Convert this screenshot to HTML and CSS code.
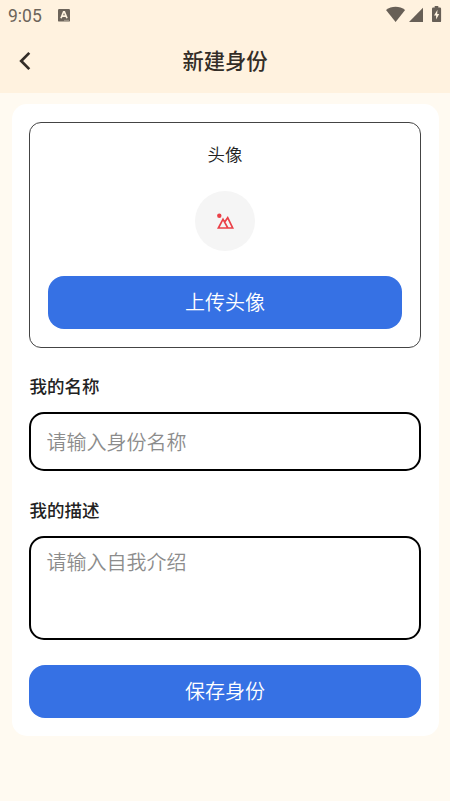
FILE: index.html
```html
<!DOCTYPE html>
<html lang="zh-CN">
<head>
<meta charset="utf-8">
<meta name="viewport" content="width=device-width, initial-scale=1">
<title>新建身份</title>
<link rel="stylesheet" href="styles.css">
</head>
<body>
<header class="top">
  <div class="status">
    <span class="clock">9:05</span>
    <svg class="notice" width="12" height="13" viewBox="0 0 12 13"><rect width="12" height="12.6" rx="1.2" fill="#6c645a"/><path d="M3 9.3 5.6 2.8h.8L9 9.3M4.1 7.2h3.8" fill="none" stroke="#fff3df" stroke-width="1.7"/><path d="M6 11.3h5" stroke="#b6ada0" stroke-width=".8"/></svg>
    <svg class="signals" width="56" height="18" viewBox="0 0 56 18" fill="#675f56">
      <path d="M0 4.1C5.5-.3 13.6-.3 19.1 4.1L9.6 16.1Z"/>
      <path d="M37 1.8V16H23Z"/>
      <path d="M48.7 0h3.6v1.5h1.6q1.2 0 1.2 1.2v12.2q0 1.2-1.2 1.2h-6.7q-1.2 0-1.2-1.2V2.7q0-1.2 1.2-1.2h1.5Z"/>
      <path d="M51.5 3.8 48 9.4h2.1v4.2L53.2 8h-2Z" fill="#fff3df"/>
    </svg>
  </div>
  <div class="bar">
    <svg class="back" width="14" height="20" viewBox="0 0 14 20"><path d="M11.3 1.9 3.2 10l8.1 8.1" fill="none" stroke="#332d27" stroke-width="2.7"/></svg>
    <h1 class="title">新建身份</h1>
  </div>
</header>
<main class="card">
  <section class="avatar-box">
    <div class="avatar-label">头像</div>
    <div class="avatar">
      <svg width="18" height="17" viewBox="0 0 18 17"><circle cx="3.3" cy="2.8" r="2.2" fill="#ea4048"/><path d="M2.4 15 7 6.2l4.8 8.8ZM8.7 8.9l3-4.2L16.7 15h-5" fill="none" stroke="#ea4048" stroke-width="1.7"/></svg>
    </div>
    <button class="btn" type="button">上传头像</button>
  </section>
  <label class="label" for="name">我的名称</label>
  <input class="field" id="name" placeholder="请输入身份名称">
  <label class="label label-bio" for="bio">我的描述</label>
  <textarea class="field field-area" id="bio" placeholder="请输入自我介绍"></textarea>
  <button class="btn save" type="button">保存身份</button>
</main>
</body>
</html>
```
FILE: styles.css
```css
* { box-sizing: border-box; }
body {
  margin: 0;
  min-height: 801px;
  background: #fffaf1;
  color: #222;
  font-family: "Noto Sans CJK SC", sans-serif;
}
.top {
  height: 92.5px;
  background: #fff2df;
}
.status {
  height: 30px;
  display: flex;
  align-items: center;
  padding: 0 8px;
}
.clock {
  width: 50px;
  font: 400 17.5px/30px Roboto, sans-serif;
  color: #6c645a;
  padding-top: 2px;
}
.signals { margin: 0 0 0 auto; }
.bar {
  height: 62px;
  display: grid;
  grid-template-columns: 36px 1fr 36px;
  align-items: center;
}
.back { margin-left: 18px; }
.title {
  margin: -2px 0 0;
  text-align: center;
  font-size: 21.3px;
  font-weight: 500;
  line-height: 32px;
  color: #332d27;
}
.card {
  margin: 11.5px 11.5px 0;
  height: 632px;
  padding: 18px 17.5px;
  border-radius: 15px;
  background: #fff;
  display: flex;
  flex-direction: column;
}
.avatar-box {
  height: 226px;
  border: 1px solid #444;
  border-radius: 12px;
  padding: 16px 18px 0;
  display: flex;
  flex-direction: column;
  align-items: center;
}
.avatar-label {
  font-size: 17.4px;
  font-weight: 350;
  line-height: 30px;
}
.avatar {
  width: 60px;
  height: 60px;
  margin: 22px 0 25px;
  border-radius: 50%;
  background: #f5f5f5;
  display: flex;
  align-items: center;
  justify-content: center;
}
.btn {
  flex: none;
  width: 100%;
  height: 53px;
  padding: 0 0 2px;
  border: 0;
  border-radius: 16px;
  background: #3671e4;
  color: #fff;
  font: 350 20px/30px "Noto Sans CJK SC", sans-serif;
}
.label {
  height: 26px;
  margin: 25px 0 13px .5px;
  font-size: 17.5px;
  font-weight: 500;
  line-height: 26px;
}
.label-bio { margin-top: 26px; }
.field {
  flex: none;
  width: 100%;
  height: 59px;
  padding: 0 15.5px;
  border: 2px solid #000;
  border-radius: 15px;
  background: #fff;
  font: 350 20px/30px "Noto Sans CJK SC", sans-serif;
  outline: 0;
  resize: none;
}
.field::placeholder { color: #8c8c8c; opacity: 1; }
.field-area {
  height: 104px;
  padding-top: 9px;
}
.save { margin-top: 25px; }
```
